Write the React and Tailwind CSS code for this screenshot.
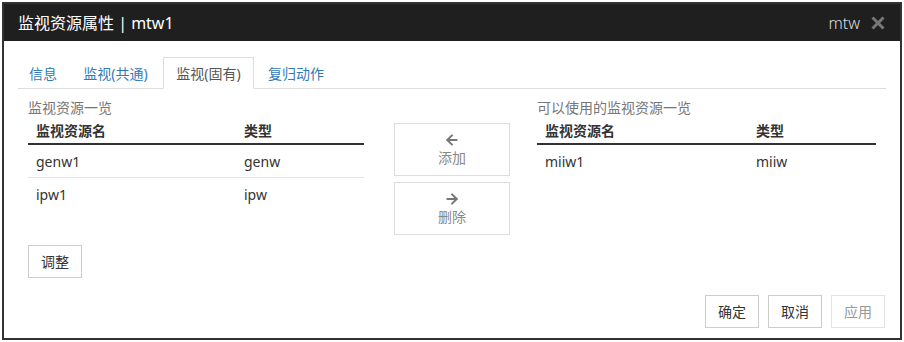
import { ArrowLeft, ArrowRight } from 'lucide-react';

const font = { fontFamily: '"Noto Sans", "Noto Sans CJK SC", sans-serif' };

const tabs = [
  ['信息', 'w-[50px]'],
  ['监视(共通)', 'w-[91px]'],
  ['监视(固有)', 'w-[91px]'],
  ['复归动作', 'w-[80px]'],
];

function ResourceTable({ label, rows, col }) {
  return (
    <div className="flex flex-col">
      <div className="h-[18px] text-[14px] leading-[18px] text-[#777]">{label}</div>
      <div className={`grid ${col} h-[28px] items-center border-b-2 border-[#333] px-[8px] text-[14px] font-bold text-[#333]`}>
        <span>监视资源名</span>
        <span>类型</span>
      </div>
      {rows.map((r, i) => (
        <div
          key={r[0]}
          className={`grid ${col} h-[33px] items-center px-[8px] text-[14px] text-[#333] ${i < rows.length - 1 ? 'border-b border-[#e5e5e5]' : ''}`}
        >
          <span>{r[0]}</span>
          <span>{r[1]}</span>
        </div>
      ))}
    </div>
  );
}

function MoveButton({ icon: Icon, text }) {
  return (
    <button className="w-[116px] h-[53px] border border-[#ddd] bg-white flex flex-col items-center justify-center gap-[1px] text-[14px] leading-[18px] text-[#888]">
      <Icon size={16} strokeWidth={3} className="text-[#777]" />
      <span>{text}</span>
    </button>
  );
}

function Btn({ children, disabled }) {
  return (
    <button
      className={`w-[54px] h-[33px] border bg-white text-[14px] ${disabled ? 'border-[#e3e3e3] text-[#999]' : 'border-[#ccc] text-[#333]'}`}
    >
      {children}
    </button>
  );
}

export default function App() {
  return (
    <div className="w-[904px] h-[342px] bg-white pt-[2px] pl-[2px]" style={font}>
      <div className="w-[900px] h-[338px] border-2 border-[#333] flex flex-col">
        {/* Header */}
        <div className="h-[37px] bg-[#1f1f1f] flex items-center justify-between pl-[14px] pr-[14px]">
          <span className="text-[16px] text-white">监视资源属性 | mtw1</span>
          <div className="flex items-center gap-[10px]">
            <span className="text-[16px] font-light text-[#ddd]">mtw</span>
            <svg width="16" height="16" viewBox="0 0 16 16">
              <path d="M2.5 2.5 L13.5 13.5 M13.5 2.5 L2.5 13.5" stroke="#777" strokeWidth="3" />
            </svg>
          </div>
        </div>

        {/* Tabs */}
        <div className="mt-[16px] mx-[14px] flex gap-[2px] border-b border-[#ddd] h-[32px]">
          {tabs.map(([t, w], i) => (
            <div
              key={t}
              className={`${w} h-[32px] flex items-center justify-center text-[14px] ${i === 2 ? 'border border-[#ddd] border-b-white bg-white text-[#555] -mb-px' : 'text-[#337ab7]'}`}
            >
              {t}
            </div>
          ))}
        </div>

        {/* Content */}
        <div className="flex ml-[24px] mt-[10px]">
          <div className="w-[336px] flex flex-col">
            <ResourceTable
              label="监视资源一览"
              col="grid-cols-[208px_1fr]"
              rows={[['genw1', 'genw'], ['ipw1', 'ipw']]}
            />
            <div className="mt-[34px]">
              <Btn>调整</Btn>
            </div>
          </div>
          <div className="ml-[30px] mt-[24px] flex flex-col gap-[6px]">
            <MoveButton icon={ArrowLeft} text="添加" />
            <MoveButton icon={ArrowRight} text="删除" />
          </div>
          <div className="ml-[27px] w-[339px]">
            <ResourceTable
              label="可以使用的监视资源一览"
              col="grid-cols-[211px_1fr]"
              rows={[['miiw1', 'miiw']]}
            />
          </div>
        </div>

        {/* Footer */}
        <div className="mt-auto flex justify-end gap-[9px] pr-[15px] pb-[10px]">
          <Btn>确定</Btn>
          <Btn>取消</Btn>
          <Btn disabled>应用</Btn>
        </div>
      </div>
    </div>
  );
}
